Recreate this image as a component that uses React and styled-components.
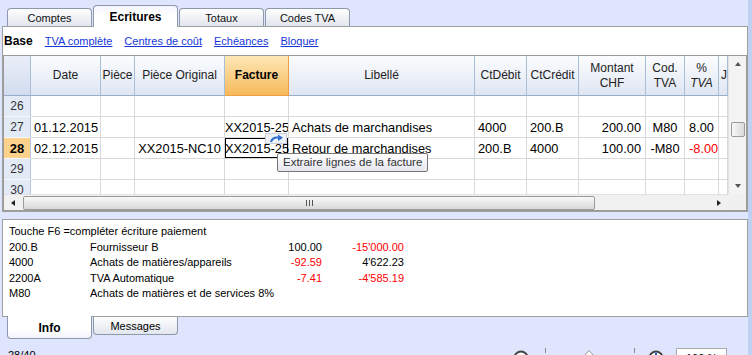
import React from "react";
import styled, { createGlobalStyle, css } from "styled-components";

const GlobalStyle = createGlobalStyle`
  html, body {
    margin: 0;
    padding: 0;
  }
  body {
    background: #dee5fc;
    font-family: "Liberation Sans", Arial, sans-serif;
    color: #000;
    overflow: hidden;
  }
`;

const COLS = "27px 70px 34px 90px 64px 186px 52px 52px 67px 39px 34px 9px";

const Screen = styled.div`
  display: flex;
  width: 752px;
  height: 355px;
  overflow: hidden;
`;

const Main = styled.div`
  width: 748px;
  display: flex;
  flex-direction: column;

  & > * {
    flex-shrink: 0;
  }
`;

const EdgeStrip = styled.div`
  width: 4px;
  background: #bfd1f1;
`;

/* top tabs */
const TabBar = styled.div`
  display: flex;
  align-items: flex-end;
  gap: 1px;
  height: 26px;
  padding-left: 7px;
`;

const Tab = styled.div`
  width: 85px;
  height: 18px;
  box-sizing: border-box;
  border: 1px solid #8d98aa;
  border-bottom: none;
  border-radius: 4px 4px 0 0;
  background: linear-gradient(#fefefe, #e2e6ee);
  font-size: 11px;
  color: #111;
  display: flex;
  align-items: center;
  justify-content: center;

  ${(p) =>
    p.$active &&
    css`
      height: 22px;
      margin-bottom: -1px;
      position: relative;
      z-index: 1;
      background: linear-gradient(#f3f6fd, #fff 40%);
      font-weight: bold;
      font-size: 12px;
      color: #000;
    `}
`;

const Panel = styled.div`
  margin-left: 2px;
  width: 746px;
  height: 186px;
  box-sizing: border-box;
  border: 1px solid #9f9f9f;
  background: #fff;
  display: flex;
  flex-direction: column;
`;

const Toolbar = styled.div`
  height: 28px;
  flex-shrink: 0;
  display: flex;
  align-items: center;
  gap: 12px;
  padding-left: 1px;
  font-size: 11px;
`;

const ToolLabel = styled.span`
  font-weight: bold;
  font-size: 12px;
`;

const ToolLink = styled.a`
  color: #1636d8;
  text-decoration: underline;
  cursor: pointer;
`;

/* grid */
const GridBox = styled.div`
  display: grid;
  grid-template-columns: 724px 18px;
  grid-template-rows: 40px 98px 16px;
  border: 1px solid #9a9a9a;
  box-sizing: border-box;
  height: 156px;
  flex-shrink: 0;
`;

const HeaderRow = styled.div`
  display: grid;
  grid-template-columns: ${COLS};
`;

const HeadCell = styled.div`
  display: flex;
  align-items: center;
  justify-content: ${(p) => (p.$left ? "flex-start" : "center")};
  padding-left: ${(p) => (p.$left ? "2px" : "0")};
  text-align: center;
  font-size: 12px;
  line-height: 15px;
  color: #222;
  white-space: pre;
  overflow: hidden;
  border-right: 1px solid #a8bdd6;
  border-bottom: 1px solid #97aecb;
  background: linear-gradient(#fbfcfe, #dfe6f2);

  ${(p) =>
    p.$corner &&
    css`
      background: linear-gradient(#e9eef8, #d3ddef);
    `}

  ${(p) =>
    p.$active &&
    css`
      background: linear-gradient(#fde7b6, #f6b95b);
      border-right-color: #eba048;
      border-bottom-color: #eba048;
      font-weight: bold;
      color: #000;
    `}

  i {
    font-style: italic;
  }
`;

const Body = styled.div`
  overflow: hidden;
`;

const DataRow = styled.div`
  display: grid;
  grid-template-columns: ${COLS};
  height: 21px;
`;

const RowNum = styled.div`
  box-sizing: border-box;
  height: 21px;
  border-right: 1px solid #b7c8de;
  border-bottom: 1px solid #f4f7fc;
  background: #e2eaf6;
  font-size: 12px;
  line-height: 21px;
  text-align: center;
  color: #333;

  ${(p) =>
    p.$active &&
    css`
      background: #fcd28c;
      font-weight: bold;
      font-size: 13px;
      color: #000;
    `}
`;

const Cell = styled.div`
  position: relative;
  box-sizing: border-box;
  height: 21px;
  border-right: 1px solid #d9d9d9;
  border-bottom: 1px solid #d9d9d9;
  padding: 0 ${(p) => (p.$align === "right" ? "4px" : p.$tight ? "0" : "3px")};
  font-size: 12.8px;
  line-height: 21px;
  text-align: ${(p) => p.$align || "left"};
  color: ${(p) => (p.$red ? "#f00" : "#000")};
  white-space: nowrap;
  overflow: ${(p) => (p.$focused ? "visible" : "hidden")};

  ${(p) =>
    p.$focused &&
    css`
      box-shadow: inset 0 0 0 1px #000;
    `}
`;

const Tooltip = styled.div`
  position: absolute;
  left: 52px;
  top: 15px;
  z-index: 3;
  height: 19px;
  box-sizing: border-box;
  padding: 0 5px;
  border: 1px solid #777;
  border-radius: 2px;
  background: linear-gradient(#ffffff, #e5e6ef);
  font-size: 11.5px;
  line-height: 17px;
  color: #333;
  white-space: nowrap;
`;

const ExtractButton = styled.div`
  position: absolute;
  left: 40px;
  top: -5px;
  z-index: 2;
  width: 22px;
  height: 11px;
  line-height: 0;
`;

/* scrollbars */
const VScroll = styled.div`
  grid-row: 1 / 3;
  grid-column: 2;
  display: flex;
  flex-direction: column;
  align-items: center;
  background: #f3f3f3;
  border-left: 1px solid #e2e2e2;
`;

const ArrowZone = styled.div`
  height: 16px;
  width: 100%;
  display: flex;
  align-items: center;
  justify-content: center;
`;

const Triangle = styled.span`
  width: 0;
  height: 0;
  border-style: solid;
  ${(p) =>
    p.$dir === "up" &&
    css`
      border-width: 0 3px 4px 3px;
      border-color: transparent transparent #555 transparent;
    `}
  ${(p) =>
    p.$dir === "down" &&
    css`
      border-width: 4px 3px 0 3px;
      border-color: #555 transparent transparent transparent;
    `}
  ${(p) =>
    p.$dir === "left" &&
    css`
      border-width: 3px 4px 3px 0;
      border-color: transparent #222 transparent transparent;
    `}
  ${(p) =>
    p.$dir === "right" &&
    css`
      border-width: 3px 0 3px 4px;
      border-color: transparent transparent transparent #222;
    `}
`;

const VTrack = styled.div`
  flex: 1;
  width: 100%;
  display: flex;
  justify-content: center;
`;

const VThumb = styled.div`
  margin-top: 50px;
  width: 14px;
  height: 15px;
  box-sizing: border-box;
  border: 1px solid #9a9a9a;
  border-radius: 2px;
  background: linear-gradient(90deg, #f8f8f8, #dadada);
`;

const HScroll = styled.div`
  display: flex;
  align-items: center;
  background: #f1f1f1;
  border-top: 1px solid #e2e2e2;
`;

const HArrow = styled.div`
  width: 18px;
  height: 100%;
  display: flex;
  align-items: center;
  justify-content: center;
`;

const HTrack = styled.div`
  flex: 1;
  height: 100%;
  display: flex;
  align-items: center;
`;

const HThumb = styled.div`
  margin-left: 1px;
  width: 572px;
  height: 14px;
  box-sizing: border-box;
  border: 1px solid #9a9a9a;
  border-radius: 2px;
  background: linear-gradient(#f9f9f9, #d8d8d8);
  display: flex;
  align-items: center;
  justify-content: center;
`;

const Grip = styled.span`
  width: 7px;
  height: 6px;
  background: repeating-linear-gradient(90deg, #555 0 1px, transparent 1px 3px);
`;

const Corner = styled.div`
  background: #f0f0f0;
`;

/* info panel */
const InfoPanel = styled.div`
  margin: 7px 0 0 2px;
  width: 746px;
  height: 98px;
  box-sizing: border-box;
  border: 1px solid #9f9f9f;
  background: #fff;
  padding: 4px 6px;
  display: grid;
  grid-template-columns: 81px 150px 82px 82px;
  grid-auto-rows: 15.5px;
  align-content: start;
  font-size: 11px;
  line-height: 15.5px;
`;

const InfoLine = styled.div`
  grid-column: 1 / -1;
`;

const InfoCell = styled.div`
  white-space: nowrap;
  text-align: ${(p) => (p.$num ? "right" : "left")};
  color: ${(p) => (p.$red ? "#f00" : "#000")};
`;

const BottomTabs = styled.div`
  display: flex;
  align-items: flex-start;
  gap: 1px;
  padding-left: 7px;
`;

const BottomTab = styled.div`
  width: 85px;
  height: 18px;
  box-sizing: border-box;
  border: 1px solid #8d98aa;
  border-top: none;
  border-radius: 0 0 4px 4px;
  background: linear-gradient(#fefefe, #e2e6ee);
  font-size: 11px;
  display: flex;
  align-items: center;
  justify-content: center;

  ${(p) =>
    p.$active &&
    css`
      height: 23px;
      margin-top: -1px;
      position: relative;
      z-index: 1;
      padding-top: 2px;
      background: linear-gradient(#fff 60%, #f3f5fa);
      font-weight: bold;
      font-size: 12px;
    `}
`;

const StatusBar = styled.div`
  display: flex;
  align-items: flex-start;
  margin-top: 10px;
  padding: 0 21px 0 8px;
  font-size: 11px;
  line-height: 13px;
`;

const Zoom = styled.div`
  margin-left: auto;
  margin-top: -1px;
  display: flex;
  align-items: flex-start;
  gap: 7px;
`;

const ZoomBox = styled.div`
  width: 51px;
  height: 20px;
  box-sizing: border-box;
  border: 1px solid #a9a9a9;
  background: #fff;
  padding-left: 9px;
  font-size: 11px;
  line-height: 18px;
`;

const headers = [
  { label: "", corner: true },
  { label: "Date" },
  { label: "Pièce" },
  { label: "Pièce Original" },
  { label: "Facture", active: true },
  { label: "Libellé" },
  { label: "CtDébit" },
  { label: "CtCrédit" },
  { label: "Montant\nCHF" },
  { label: "Cod.\nTVA" },
  { label: "pct" },
  { label: "Jo", left: true },
];

const rows = [
  { n: 26 },
  {
    n: 27,
    date: "01.12.2015",
    facture: "XX2015-25",
    libelle: "Achats de marchandises",
    debit: "4000",
    credit: "200.B",
    montant: "200.00",
    cod: "M80",
    pct: "8.00",
  },
  {
    n: 28,
    active: true,
    date: "02.12.2015",
    orig: "XX2015-NC10",
    facture: "XX2015-25",
    libelle: "Retour de marchandises",
    debit: "200.B",
    credit: "4000",
    montant: "100.00",
    cod: "-M80",
    pct: "-8.00",
    red: true,
  },
  { n: 29 },
  { n: 30 },
];

const info = [
  { a: "200.B", b: "Fournisseur B", c: "100.00", d: "-15'000.00", dRed: true },
  { a: "4000", b: "Achats de matières/appareils", c: "-92.59", cRed: true, d: "4'622.23" },
  { a: "2200A", b: "TVA Automatique", c: "-7.41", cRed: true, d: "-4'585.19", dRed: true },
  { a: "M80", b: "Achats de matières et de services 8%" },
];

function ExtractIcon() {
  return (
    <svg width="22" height="11" viewBox="0 0 22 11">
      <rect x="0.5" y="0.5" width="21" height="10" fill="#eef1f6" stroke="#c9ced8" />
      <path d="M6 9 C7 5 10 4 14 4.5" fill="none" stroke="#2f6fd0" strokeWidth="2" />
      <polygon points="13,1.5 18,4.8 13,8" fill="#2f6fd0" />
    </svg>
  );
}

function ZoomSlider() {
  return (
    <svg width="160" height="22" viewBox="0 0 160 22">
      <circle cx="12" cy="10" r="6.5" fill="#fff" stroke="#444" strokeWidth="2" />
      <line x1="36.5" y1="0" x2="36.5" y2="5" stroke="#888" />
      <polygon points="75,8 80,2.5 85,8 85,22 75,22" fill="#fff" stroke="#999" />
      <line x1="125.5" y1="0" x2="125.5" y2="5" stroke="#888" />
      <circle cx="147" cy="10" r="6.5" fill="#fff" stroke="#444" strokeWidth="2" />
      <line x1="147" y1="5" x2="147" y2="15" stroke="#1a5fd0" strokeWidth="2" />
    </svg>
  );
}

function GridRow({ r }) {
  return (
    <DataRow>
      <RowNum $active={r.active}>{r.n}</RowNum>
      <Cell $align="center">{r.date}</Cell>
      <Cell />
      <Cell $align="center">{r.orig}</Cell>
      {r.active ? (
        <Cell $align="center" $tight $focused>
          {r.facture}
          <ExtractButton>
            <ExtractIcon />
          </ExtractButton>
          <Tooltip>Extraire lignes de la facture</Tooltip>
        </Cell>
      ) : (
        <Cell $align="center" $tight>
          {r.facture}
        </Cell>
      )}
      <Cell>{r.libelle}</Cell>
      <Cell>{r.debit}</Cell>
      <Cell>{r.credit}</Cell>
      <Cell $align="right">{r.montant}</Cell>
      <Cell $align="center">{r.cod}</Cell>
      <Cell $align="right" $red={r.red}>
        {r.pct}
      </Cell>
      <Cell />
    </DataRow>
  );
}

export default function App() {
  return (
    <Screen>
      <GlobalStyle />
      <Main>
        <TabBar>
          <Tab>Comptes</Tab>
          <Tab $active>Ecritures</Tab>
          <Tab>Totaux</Tab>
          <Tab>Codes TVA</Tab>
        </TabBar>

        <Panel>
          <Toolbar>
            <ToolLabel>Base</ToolLabel>
            <ToolLink>TVA complète</ToolLink>
            <ToolLink>Centres de coût</ToolLink>
            <ToolLink>Echéances</ToolLink>
            <ToolLink>Bloquer</ToolLink>
          </Toolbar>

          <GridBox>
            <HeaderRow>
              {headers.map((h, i) => (
                <HeadCell key={i} $corner={h.corner} $active={h.active} $left={h.left}>
                  {h.label === "pct" ? (
                    <span>
                      %<br />
                      <i>TVA</i>
                    </span>
                  ) : (
                    h.label
                  )}
                </HeadCell>
              ))}
            </HeaderRow>

            <VScroll>
              <ArrowZone>
                <Triangle $dir="up" />
              </ArrowZone>
              <VTrack>
                <VThumb />
              </VTrack>
              <ArrowZone>
                <Triangle $dir="down" />
              </ArrowZone>
            </VScroll>

            <Body>
              {rows.map((r) => (
                <GridRow key={r.n} r={r} />
              ))}
            </Body>

            <HScroll>
              <HArrow>
                <Triangle $dir="left" />
              </HArrow>
              <HTrack>
                <HThumb>
                  <Grip />
                </HThumb>
              </HTrack>
              <HArrow>
                <Triangle $dir="right" />
              </HArrow>
            </HScroll>
            <Corner />
          </GridBox>
        </Panel>

        <InfoPanel>
          <InfoLine>Touche F6 =compléter écriture paiement</InfoLine>
          {info.map((l) => (
            <React.Fragment key={l.a}>
              <InfoCell>{l.a}</InfoCell>
              <InfoCell>{l.b}</InfoCell>
              <InfoCell $num $red={l.cRed}>
                {l.c}
              </InfoCell>
              <InfoCell $num $red={l.dRed}>
                {l.d}
              </InfoCell>
            </React.Fragment>
          ))}
        </InfoPanel>

        <BottomTabs>
          <BottomTab $active>Info</BottomTab>
          <BottomTab>Messages</BottomTab>
        </BottomTabs>

        <StatusBar>
          <span>28/40</span>
          <Zoom>
            <ZoomSlider />
            <ZoomBox>100 %</ZoomBox>
          </Zoom>
        </StatusBar>
      </Main>
      <EdgeStrip />
    </Screen>
  );
}
